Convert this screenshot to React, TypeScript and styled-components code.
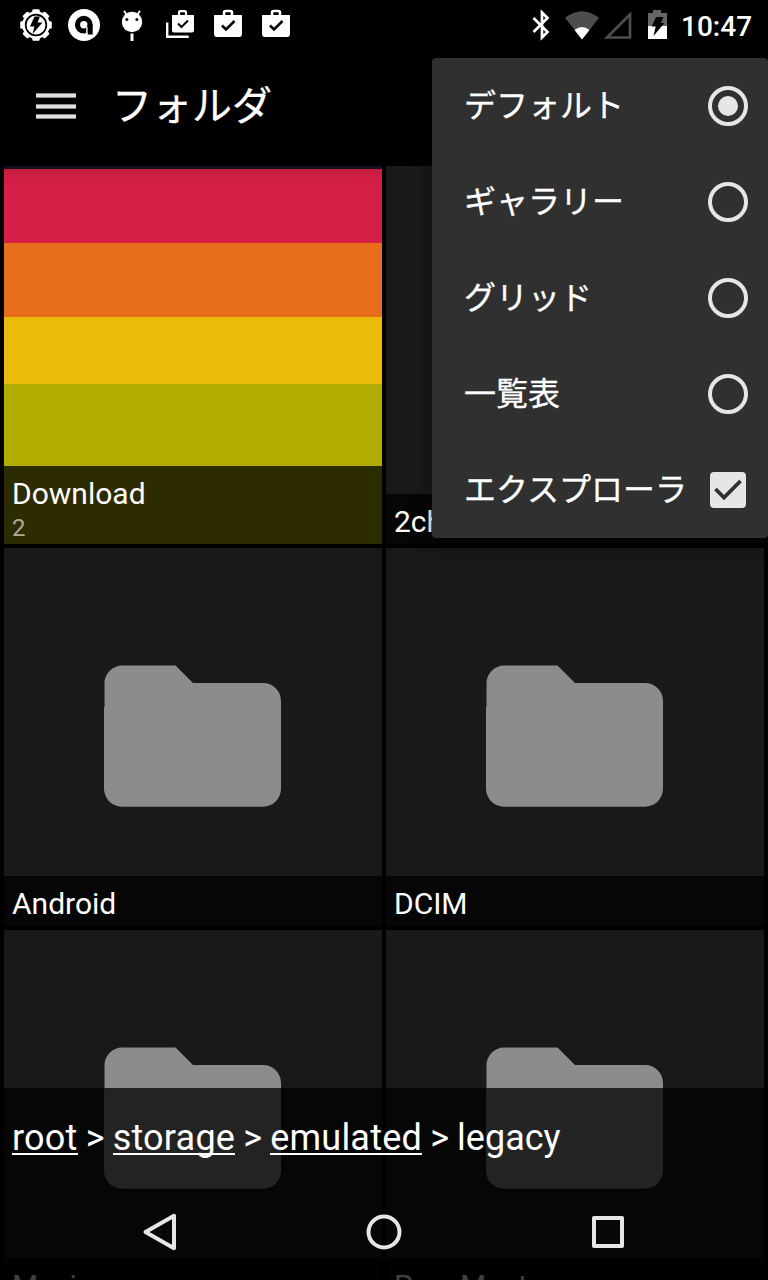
import React from 'react';
import styled, { createGlobalStyle } from 'styled-components';

const GlobalStyle = createGlobalStyle`
  * { box-sizing: border-box; }
  body {
    margin: 0;
    background: #000;
    overflow: hidden;
    font-family: Roboto, 'Noto Sans CJK JP', sans-serif;
    color: #fff;
  }
`;

const Screen = styled.div`
  position: relative;
  width: 768px;
  height: 1280px;
  overflow: hidden;
  background: #000;
  display: flex;
  flex-direction: column;
`;

const StatusBar = styled.header`
  flex: none;
  height: 50px;
  padding: 0 16px 0 20px;
  display: flex;
  justify-content: space-between;
  align-items: center;
`;

const IconRow = styled.div`
  display: flex;
  align-items: center;
  gap: 16px;
  svg { display: block; }
`;

const SystemIcons = styled.div`
  display: flex;
  align-items: center;
  svg { display: block; }
`;

const Clock = styled.span`
  width: 71px;
  margin-left: 13px;
  font-size: 28px;
  font-weight: 500;
  line-height: 32px;
  padding-top: 3px;
  white-space: nowrap;
`;

const AppBar = styled.div`
  flex: none;
  height: 116px;
  padding: 0 36px 4px;
  display: flex;
  align-items: center;
  gap: 36px;
`;

const MenuButton = styled.button`
  padding: 0;
  border: 0;
  background: none;
  width: 40px;
  height: 26px;
  display: flex;
  flex-direction: column;
  justify-content: space-between;
`;

const MenuLine = styled.span`
  height: 5px;
  width: 40px;
  background: #e0e0e0;
  border: solid #8a8a8a;
  border-width: 1px 0;
`;

const Title = styled.h1`
  margin: 0;
  padding-top: 1px;
  font-size: 40px;
  line-height: 48px;
  font-weight: 400;
  -webkit-text-stroke: 0.3px #fff;
`;

const Grid = styled.main`
  flex: none;
  padding: 0 4px;
  display: grid;
  grid-template-columns: 378px 378px;
  grid-auto-rows: 378px;
  gap: 4px;
`;

const Tile = styled.section`
  display: grid;
  grid-template: 100% / 100%;
  background: #191919;
  > * { grid-area: 1 / 1; }
`;

const Stripes = styled.div`
  background: linear-gradient(
    #14101f 0 3px, #c21e40 3px, #d41e45 14px, #d41e45 77px, #e76f1c 77px 151px,
    #eabc0a 151px 218px, #b3ac00 218px
  );
`;

const FolderArt = styled.svg`
  display: block;
  margin: 117px 0 0 100px;
  width: 177px;
  height: 142px;
`;

const Caption = styled.div<{ $counted?: boolean }>`
  align-self: end;
  z-index: 1;
  height: ${p => (p.$counted ? 78 : 50)}px;
  padding: 10px 8px 0;
  background: rgba(0, 0, 0, 0.75);
`;

const Name = styled.div`
  font-size: 30px;
  line-height: 36px;
`;

const Count = styled.div`
  font-size: 24px;
  line-height: 28px;
  margin-top: 2px;
  color: #aba99a;
`;

const BottomOverlay = styled.footer`
  position: absolute;
  left: 0;
  bottom: 0;
  z-index: 2;
  width: 768px;
  height: 192px;
  background: rgba(0, 0, 0, 0.75);
  display: flex;
  flex-direction: column;
`;

const Breadcrumb = styled.nav`
  height: 96px;
  padding: 29px 12px 0;
  font-size: 36px;
  line-height: 42px;
  white-space: pre;
  word-spacing: -0.8px;
`;

const Crumb = styled.span`
  display: inline-block;
  height: 38px;
  border-bottom: 2px solid #fff;
  letter-spacing: 0.22px;
`;

const SystemNav = styled.div`
  height: 96px;
  padding: 0 48px;
  display: grid;
  grid-template-columns: repeat(3, 224px);
  align-items: center;
  justify-items: center;
`;

const Popup = styled.div`
  position: absolute;
  z-index: 3;
  left: 432px;
  top: 58px;
  width: 336px;
  height: 480px;
  border-radius: 4px;
  background: #303030;
  box-shadow: 0 8px 18px rgba(0, 0, 0, 0.4);
`;

const Option = styled.div`
  height: 96px;
  padding: 0 20px 0 32px;
  display: flex;
  align-items: center;
  justify-content: space-between;
  font-size: 32px;
  line-height: 40px;
  font-weight: 400;
  -webkit-text-stroke: 0.3px #fff;
  white-space: nowrap;
  svg { display: block; flex: none; }
`;

const Gear = () => {
  const teeth = Array.from({ length: 8 }, (_, i) => i * 45);
  return (
    <svg width="32" height="32" viewBox="0 0 32 32">
      {teeth.map(a => (
        <rect key={a} x="12.3" y="0.2" width="7.4" height="6" rx="1.2" fill="#fff" transform={`rotate(${a} 16 16)`} />
      ))}
      <circle cx="16" cy="16" r="13.800" fill="#fff" />
      <circle cx="16" cy="16" r="10.3" fill="none" stroke="#000" strokeWidth="1.700" />
      <path d="M14.500 7.500h5.500l-2.500 6h5L12.500 25l2-7.500h-4.500z" fill="#000" />
    </svg>
  );
};

const RingA = () => (
  <svg width="32" height="32" viewBox="0 0 32 32">
    <circle cx="16" cy="16" r="16" fill="#fff" />
    <circle cx="15.800" cy="15.700" r="6.300" fill="none" stroke="#000" strokeWidth="5.200" />
    <path d="M19.500 15.700v9.800h5.200v-9.800z" fill="#000" />
    <path d="M18.200 19v7h1.400v-8.500z" fill="#fff" />
  </svg>
);

const Lollipop = () => (
  <svg width="32" height="32" viewBox="0 0 32 32">
    <circle cx="16" cy="13" r="10.200" fill="#fff" />
    <path d="M10.800 6L8 1.800M21.200 6L24 1.800" stroke="#fff" strokeWidth="1.800" />
    <circle cx="10.900" cy="10.500" r="1.500" fill="#000" />
    <circle cx="20.900" cy="10.500" r="1.500" fill="#000" />
    <path d="M14.500 24.500h3v7.500h-3z" fill="#fff" />
  </svg>
);

const Bag = () => (
  <svg width="32" height="32" viewBox="0 0 32 32">
    <path d="M12 6V3.500a1.500 1.500 0 0 1 1.500-1.500h5a1.500 1.500 0 0 1 1.500 1.500V6" fill="none" stroke="#fff" strokeWidth="2.600" />
    <path d="M2 6h28v19a3 3 0 0 1-3 3H5a3 3 0 0 1-3-3z" fill="#fff" />
    <path d="M10 16.500l4 4 8.500-8.500" fill="none" stroke="#000" strokeWidth="2.600" />
  </svg>
);

const StackedBags = () => (
  <svg width="32" height="32" viewBox="0 0 32 32">
    <path d="M15 6V3.500a1.300 1.300 0 0 1 1.300-1.300h4.400A1.300 1.300 0 0 1 22 3.500V6" fill="none" stroke="#fff" strokeWidth="2.200" />
    <path d="M8 6h22v15.500a2 2 0 0 1-2 2H10a2 2 0 0 1-2-2z" fill="#fff" />
    <path d="M14 14.500l3.500 3.500 6.500-6.500" fill="none" stroke="#000" strokeWidth="2" />
    <path d="M3.200 13.500v14.300h21.500" fill="none" stroke="#fff" strokeWidth="2.400" />
  </svg>
);

const SystemGlyphs = () => (
  <svg width="140" height="40" viewBox="528 5 140 40">
    <path d="M533.500 18l14 14-5.500 5.500v-25l5.500 5.500-14 14" fill="none" stroke="#fff" strokeWidth="2.700" />
    <path d="M582 39.500L565 17.800Q582 4.500 599 17.800z" fill="#4d4d4d" />
    <path d="M582 39.500L574.500 30Q582 24 589.500 30z" fill="#fff" />
    <path d="M630 14.500v23h-23z" fill="none" stroke="#4d4d4d" strokeWidth="2.700" />
    <path d="M648 13h5v-3h8v3h6v13h-19z" fill="#666" />
    <path d="M648 26h19v13h-19z" fill="#fff" />
    <path d="M656 17h7.500l-2.500 6h3.500l-11 13 2.200-9.500h-4z" fill="#000" />
  </svg>
);

const Folder = () => (
  <FolderArt viewBox="0 0 177 142">
    <path
      d="M18 .5h53.500L89 18h70a18 18 0 0 1 18 18v87.700a18 18 0 0 1-18 18H18a18 18 0 0 1-18-18V42h.5V18A17.700 17.700 0 0 1 18 .5z"
      fill="#8d8b8d"
    />
  </FolderArt>
);

const Radio = ({ checked }: { checked?: boolean }) => (
  <svg width="40" height="40" viewBox="0 0 40 40">
    <circle cx="20" cy="20" r="18" fill="none" stroke="#e6e6e6" strokeWidth="4" />
    {checked && <circle cx="20" cy="20" r="10" fill="#e6e6e6" />}
  </svg>
);

const Checkbox = () => (
  <svg width="40" height="40" viewBox="0 0 40 40">
    <rect x="2" y="2" width="36" height="36" rx="4" fill="#e6e6e6" />
    <path d="M7.500 19l8.500 8.500L32.500 11" fill="none" stroke="#303030" strokeWidth="3.800" />
  </svg>
);

const BackIcon = () => (
  <svg width="40" height="40" viewBox="0 0 40 40">
    <path d="M5.500 20L34 3.800v32.400z" fill="none" stroke="#e6e6e6" strokeWidth="4" strokeLinejoin="round" />
  </svg>
);

const HomeIcon = () => (
  <svg width="40" height="40" viewBox="0 0 40 40">
    <circle cx="20" cy="20" r="15.500" fill="none" stroke="#e6e6e6" strokeWidth="4" />
  </svg>
);

const RecentsIcon = () => (
  <svg width="40" height="40" viewBox="0 0 40 40">
    <rect x="6" y="6" width="28" height="28" fill="none" stroke="#e6e6e6" strokeWidth="4" strokeLinejoin="round" />
  </svg>
);

const folders = ['2ch', 'Android', 'DCIM', 'Movies', 'PassMaster'];
const viewModes = ['デフォルト', 'ギャラリー', 'グリッド', '一覧表'];

export default function App() {
  return (
    <>
      <GlobalStyle />
      <Screen>
        <StatusBar>
          <IconRow>
            <Gear />
            <RingA />
            <Lollipop />
            <StackedBags />
            <Bag />
            <Bag />
          </IconRow>
          <SystemIcons>
            <SystemGlyphs />
            <Clock>10:47</Clock>
          </SystemIcons>
        </StatusBar>
        <AppBar>
          <MenuButton aria-label="メニュー">
            <MenuLine />
            <MenuLine />
            <MenuLine />
          </MenuButton>
          <Title>フォルダ</Title>
        </AppBar>
        <Grid>
          <Tile>
            <Stripes />
            <Caption $counted>
              <Name>Download</Name>
              <Count>2</Count>
            </Caption>
          </Tile>
          {folders.map(name => (
            <Tile key={name}>
              <Folder />
              <Caption>
                <Name>{name}</Name>
              </Caption>
            </Tile>
          ))}
        </Grid>
        <BottomOverlay>
          <Breadcrumb>
            <Crumb>root</Crumb> &gt; <Crumb>storage</Crumb> &gt; <Crumb>emulated</Crumb> &gt; legacy
          </Breadcrumb>
          <SystemNav>
            <BackIcon />
            <HomeIcon />
            <RecentsIcon />
          </SystemNav>
        </BottomOverlay>
        <Popup>
          {viewModes.map((mode, i) => (
            <Option key={mode}>
              {mode}
              <Radio checked={i === 0} />
            </Option>
          ))}
          <Option>
            エクスプローラ
            <Checkbox />
          </Option>
        </Popup>
      </Screen>
    </>
  );
}
